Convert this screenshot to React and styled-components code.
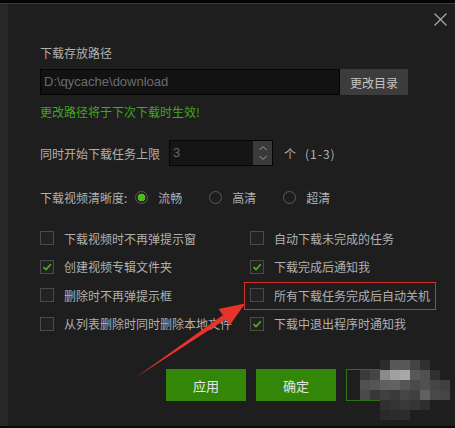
import React from "react";
import styled, { createGlobalStyle } from "styled-components";

const GlobalStyle = createGlobalStyle`
  html, body {
    margin: 0;
    padding: 0;
    background: #000;
  }
  body {
    font-family: "Noto Sans CJK SC", "Microsoft YaHei", sans-serif;
    font-size: 12px;
  }
`;

//Mosaic data (grey levels, null = transparent)
const mosaic = [
  [null, null, null, 0x2c, 0x58, 0x58, 0x44, 0x30, null, null],
  [null, 0x3a, 0x45, 0x8a, 0xa0, 0xa8, 0x58, 0x50, 0x30, null],
  [null, 0x50, 0x55, 0x60, 0x62, 0x55, 0x4a, 0x50, 0x45, 0x40],
  [null, 0x4a, 0x38, 0x40, 0x3a, 0x45, 0x40, 0x60, 0x48, 0x45],
  [null, null, null, 0x30, 0x33, 0x38, 0x35, 0x2e, null, null],
  [null, null, null, 0x2a, 0x2c, 0x2c, null, null, null, null],
];

const CheckBox = ({ checked }) => (
  <Box>
    {checked && (
      <svg width="12" height="12" viewBox="0 0 12 12">
        <path d="M2.5 6.2 L5 8.6 L9.8 3.2" fill="none" stroke="#4fb41f" strokeWidth="1.6" />
      </svg>
    )}
  </Box>
);

const Option = ({ label, checked }) => (
  <OptionItem>
    <CheckBox checked={checked} />
    <span>{label}</span>
  </OptionItem>
);

const App = () => {
  return (
    <>
      <GlobalStyle />
      <Page>
        <TopBand />
        <Middle>
          <Strip />
          <Dialog>
            <Header>
              <Close>
                <svg width="13" height="13" viewBox="0 0 13 13">
                  <path d="M0.5 0.5 L12.5 12.5 M12.5 0.5 L0.5 12.5" stroke="#a8a8a8" strokeWidth="1.3" />
                </svg>
              </Close>
            </Header>
            <Content>
              <Label>下载存放路径</Label>
              <PathRow>
                <PathInput>D:\qycache\download</PathInput>
                <GreyButton>更改目录</GreyButton>
              </PathRow>
              <Hint>更改路径将于下次下载时生效!</Hint>

              <InlineRow>
                <span>同时开始下载任务上限</span>
                <Spin>
                  <SpinValue>3</SpinValue>
                  <SpinArrows>
                    <svg width="10" height="22" viewBox="0 0 10 22">
                      <path d="M1.5 8 L5 4.5 L8.5 8 M1.5 14 L5 17.5 L8.5 14" fill="none" stroke="#9a9a9a" strokeWidth="1" />
                    </svg>
                  </SpinArrows>
                </Spin>
                <Unit>个</Unit>
                <Range>(1-3)</Range>
              </InlineRow>

              <RadioRow>
                <span>下载视频清晰度:</span>
                <Radio checked first>流畅</Radio>
                <Radio>高清</Radio>
                <Radio>超清</Radio>
              </RadioRow>

              <Options>
                <Option label="下载视频时不再弹提示窗" />
                <Option label="自动下载未完成的任务" />
                <Option label="创建视频专辑文件夹" checked />
                <Option label="下载完成后通知我" checked />
                <Option label="删除时不再弹提示框" />
                <Option label="所有下载任务完成后自动关机" />
                <Option label="从列表删除时同时删除本地文件" />
                <Option label="下载中退出程序时通知我" checked />
              </Options>

              <Buttons>
                <GreenButton>应用</GreenButton>
                <GreenButton>确定</GreenButton>
                <CancelButton>
                  <Mosaic>
                    {mosaic.flat().map((v, i) => (
                      <Cell
                        key={i}
                        style={{ background: v === null ? "transparent" : `rgb(${v},${v},${v})` }}
                      />
                    ))}
                  </Mosaic>
                </CancelButton>
              </Buttons>
            </Content>

            <Highlight />
            <Arrow width="455" height="428" viewBox="0 0 455 428">
              <polygon points="135,378 225.8,319.2 223,315" fill="#e8332b" />
              <polygon points="245,303.5 230,325 218.5,309" fill="#e8332b" />
            </Arrow>
          </Dialog>
        </Middle>
        <BottomBand />
      </Page>
    </>
  );
};

const Page = styled.div`
  width: 455px;
  height: 428px;
  display: flex;
  flex-direction: column;
  overflow: hidden;
`;

const TopBand = styled.div`
  height: 4px;
  background: #050505;
  border-bottom: 1px solid #3a3a3a;
  box-sizing: border-box;
`;

const BottomBand = styled.div`
  height: 2px;
  background: #0a0a0a;
`;

const Middle = styled.div`
  flex: 1;
  display: flex;
`;

const Strip = styled.div`
  width: 8px;
  background: #282828;
`;

const Dialog = styled.div`
  flex: 1;
  position: relative;
  background: #1e1e1e;
  color: #b0b0b0;
`;

const Header = styled.div`
  height: 32px;
  display: flex;
  justify-content: flex-end;
  align-items: flex-start;
`;

const Close = styled.div`
  width: 13px;
  height: 13px;
  margin: 9px 8px 0 0;
  display: flex;
`;

const Content = styled.div`
  padding-left: 32px;
  display: flex;
  flex-direction: column;
`;

const Label = styled.div`
  line-height: 17px;
  margin-top: 8px;
`;

const PathRow = styled.div`
  display: flex;
  margin-top: 8px;
  height: 26px;
`;

const PathInput = styled.div`
  width: 300px;
  box-sizing: border-box;
  background: #121212;
  border: 1px solid #050505;
  color: #6c6c6c;
  font-family: "Liberation Sans", "Noto Sans", sans-serif;
  font-size: 13px;
  line-height: 24px;
  padding-left: 3px;
`;

const GreyButton = styled.div`
  width: 68px;
  background: #3c3c3c;
  color: #c4c4c4;
  display: flex;
  align-items: center;
  justify-content: center;
`;

const Hint = styled.div`
  color: #3fa81c;
  line-height: 17px;
  margin-top: 8px;
`;

const InlineRow = styled.div`
  display: flex;
  align-items: center;
  margin-top: 20px;
  height: 26px;
`;

const Spin = styled.div`
  width: 104px;
  height: 26px;
  box-sizing: border-box;
  margin-left: 9px;
  border: 1px solid #050505;
  background: #151515;
  display: flex;
`;

const SpinValue = styled.div`
  flex: 1;
  color: #5c6878;
  font-family: "Liberation Sans", sans-serif;
  font-size: 13px;
  line-height: 24px;
  padding-left: 3px;
`;

const SpinArrows = styled.div`
  width: 19px;
  background: #3a3a3a;
  display: flex;
  align-items: center;
  justify-content: center;
`;

const Unit = styled.span`
  margin-left: 11px;
`;

const Range = styled.span`
  margin-left: 9px;
  letter-spacing: 1px;
`;

const RadioRow = styled.div`
  display: flex;
  align-items: center;
  margin-top: 22px;
  height: 18px;
`;

const RadioItem = styled.span`
  display: flex;
  align-items: center;
  gap: 10px;
  margin-left: ${(p) => (p.$first ? "8px" : "0")};
  width: 74px;
  &::before {
    content: "";
    width: 11px;
    height: 11px;
    border-radius: 50%;
    border: 1.5px solid #5a5a5a;
    background: ${(p) =>
      p.$checked ? "radial-gradient(circle, #52b81c 0 3.6px, transparent 4.2px)" : "none"};
  }
`;

const Radio = ({ checked, first, children }) => (
  <RadioItem $checked={checked} $first={first}>
    {children}
  </RadioItem>
);

const Options = styled.div`
  display: grid;
  grid-template-columns: 210px 1fr;
  grid-auto-rows: 28.5px;
  margin-top: 18px;
`;

const OptionItem = styled.div`
  display: flex;
  align-items: center;
  gap: 10px;
`;

const Box = styled.div`
  width: 14px;
  height: 14px;
  box-sizing: border-box;
  border: 1px solid #4a4a4a;
  background: #222;
  display: flex;
  align-items: center;
  justify-content: center;
`;

const Buttons = styled.div`
  display: flex;
  gap: 10px;
  margin-top: 31px;
  padding-left: 126px;
`;

const GreenButton = styled.div`
  width: 80px;
  height: 32px;
  background: #338708;
  color: #e6e6e6;
  font-size: 13px;
  display: flex;
  align-items: center;
  justify-content: center;
`;

const CancelButton = styled.div`
  width: 80px;
  height: 32px;
  box-sizing: border-box;
  border: 1px solid #2f7010;
  position: relative;
`;

const Mosaic = styled.div`
  position: absolute;
  left: 3px;
  top: -10px;
  display: grid;
  grid-template-columns: repeat(10, 10px);
  grid-auto-rows: 10px;
`;

const Cell = styled.div``;

const Highlight = styled.div`
  position: absolute;
  left: 236px;
  top: 278px;
  width: 192px;
  height: 28px;
  box-sizing: border-box;
  border: 1px solid #d4302c;
  pointer-events: none;
`;

const Arrow = styled.svg`
  position: absolute;
  left: -8px;
  top: -4px;
  pointer-events: none;
`;

export default App;
